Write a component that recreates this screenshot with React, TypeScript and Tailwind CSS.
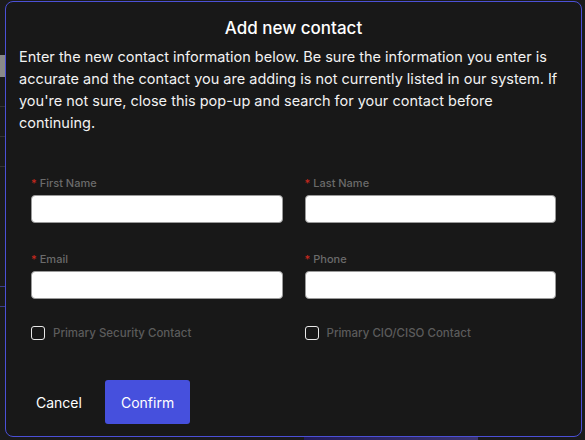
import React from 'react';

const font = { fontFamily: 'Inter, "Noto Sans", sans-serif' };

// label + white input
const Field: React.FC<{ label: string }> = ({ label }) => (
  <div className="flex flex-col">
    <label className="flex items-center h-[16px] text-[11px] leading-[16px] text-[#6b6b6b] font-medium mb-[4px]">
      <span className="text-[#c8281e] mr-[3px] text-[11px]">*</span>
      {label}
    </label>
    <input
      type="text"
      className="h-[28px] w-full bg-white rounded-[4px] border border-[#9a9a9a] outline-none px-2 text-[13px] text-black"
    />
  </div>
);

const Check: React.FC<{ label: string }> = ({ label }) => (
  <label className="flex items-center h-[16px] gap-[8px]">
    <span className="w-[14px] h-[14px] rounded-[3px] border-[1.5px] border-[#e8e8e8] shrink-0" />
    <span className="text-[11.5px] leading-[16px] text-[#5c5c5c] font-medium">{label}</span>
  </label>
);

export default function App() {
  return (
    <div className="relative w-[585px] h-[440px] overflow-hidden bg-[#1b1b1b]" style={font}>
      {/* page behind the modal */}
      <div className="flex flex-col w-[6px] pt-[55px] gap-0">
        <div className="h-[22px] bg-[#8a8a8a]" />
        <div className="h-[30px] border-b border-[#333]" />
        <div className="h-[30px] border-b border-[#333]" />
        <div className="h-[30px] border-b border-[#333]" />
        <div className="h-[120px] border-b border-[#3a3f8a]" />
        <div className="h-[20px] border-b border-[#3a3f8a]" />
      </div>
      <div className="absolute left-[304px] top-[437px] w-[174px] h-[3px] bg-gradient-to-r from-[#231c5a] to-[#3b3570]" />

      {/* modal */}
      <div className="absolute left-[5px] top-[1px] w-[577px] h-[436px] bg-[#181818] border border-[#4b50d6] rounded-[8px] flex flex-col">
        <h2 className="pt-[12px] text-center text-[17px] leading-[28px] font-medium text-white">Add new contact</h2>
        <p className="mt-[4px] px-[13px] text-[14.5px] leading-[22px] text-[#f2f2f2]">
          Enter the new contact information below. Be sure the information you enter is accurate and the contact you are adding is not currently listed in our system. If you're not sure, close this pop-up and search for your contact before continuing.
        </p>

        <div className="mt-[41px] px-[25px] grid grid-cols-2 gap-x-[22px] gap-y-[28px]">
          <Field label="First Name" />
          <Field label="Last Name" />
          <Field label="Email" />
          <Field label="Phone" />
        </div>

        <div className="mt-[26px] px-[25px] grid grid-cols-2 gap-x-[22px]">
          <Check label="Primary Security Contact" />
          <Check label="Primary CIO/CISO Contact" />
        </div>

        <div className="mt-[39px] pl-[14px] flex items-center gap-[7px]">
          <button className="h-[44px] px-4 text-[14px] text-white">Cancel</button>
          <button className="h-[44px] px-4 rounded-[3px] bg-[#4650dd] text-[14px] text-white">Confirm</button>
        </div>
      </div>
    </div>
  );
}
